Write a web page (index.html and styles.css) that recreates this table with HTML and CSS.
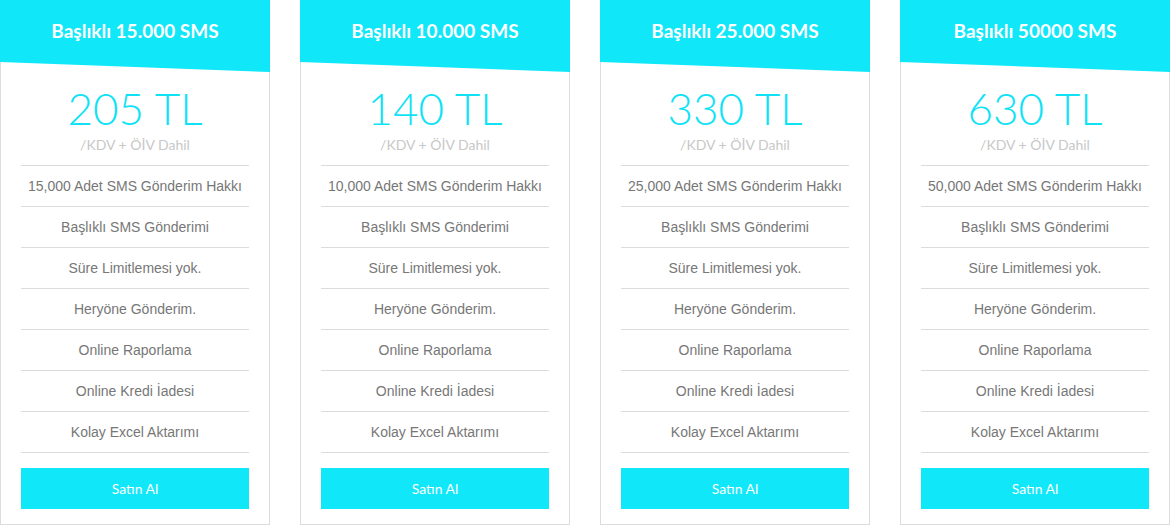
FILE: index.html
```html
<!DOCTYPE html>
<html lang="tr">
<head>
<meta charset="utf-8">
<title>SMS Paketleri</title>
<link rel="stylesheet" href="styles.css">
</head>
<body>
<div class="plans">
  <div class="card">
    <div class="card-head">Başlıklı 15.000 SMS</div>
    <div class="card-body">
      <div class="price">205 TL</div>
      <div class="tax">/KDV + ÖİV Dahil</div>
      <ul class="features">
        <li>15,000 Adet SMS Gönderim Hakkı</li>
        <li>Başlıklı SMS Gönderimi</li>
        <li>Süre Limitlemesi yok.</li>
        <li>Heryöne Gönderim.</li>
        <li>Online Raporlama</li>
        <li>Online Kredi İadesi</li>
        <li>Kolay Excel Aktarımı</li>
      </ul>
      <a class="buy" href="#">Satın Al</a>
    </div>
  </div>
  <div class="card">
    <div class="card-head">Başlıklı 10.000 SMS</div>
    <div class="card-body">
      <div class="price">140 TL</div>
      <div class="tax">/KDV + ÖİV Dahil</div>
      <ul class="features">
        <li>10,000 Adet SMS Gönderim Hakkı</li>
        <li>Başlıklı SMS Gönderimi</li>
        <li>Süre Limitlemesi yok.</li>
        <li>Heryöne Gönderim.</li>
        <li>Online Raporlama</li>
        <li>Online Kredi İadesi</li>
        <li>Kolay Excel Aktarımı</li>
      </ul>
      <a class="buy" href="#">Satın Al</a>
    </div>
  </div>
  <div class="card">
    <div class="card-head">Başlıklı 25.000 SMS</div>
    <div class="card-body">
      <div class="price">330 TL</div>
      <div class="tax">/KDV + ÖİV Dahil</div>
      <ul class="features">
        <li>25,000 Adet SMS Gönderim Hakkı</li>
        <li>Başlıklı SMS Gönderimi</li>
        <li>Süre Limitlemesi yok.</li>
        <li>Heryöne Gönderim.</li>
        <li>Online Raporlama</li>
        <li>Online Kredi İadesi</li>
        <li>Kolay Excel Aktarımı</li>
      </ul>
      <a class="buy" href="#">Satın Al</a>
    </div>
  </div>
  <div class="card">
    <div class="card-head">Başlıklı 50000 SMS</div>
    <div class="card-body">
      <div class="price">630 TL</div>
      <div class="tax">/KDV + ÖİV Dahil</div>
      <ul class="features">
        <li>50,000 Adet SMS Gönderim Hakkı</li>
        <li>Başlıklı SMS Gönderimi</li>
        <li>Süre Limitlemesi yok.</li>
        <li>Heryöne Gönderim.</li>
        <li>Online Raporlama</li>
        <li>Online Kredi İadesi</li>
        <li>Kolay Excel Aktarımı</li>
      </ul>
      <a class="buy" href="#">Satın Al</a>
    </div>
  </div>
</div>
</body>
</html>
```
FILE: styles.css
```css
* { box-sizing: border-box; }
html, body { margin: 0; padding: 0; background: #fff; }
body { font-family: "Lato", "Liberation Sans", sans-serif; }

.plans {
  display: flex;
  gap: 30px;
  align-items: flex-start;
}

.card {
  width: 270px;
  border: 1px solid #dcdcdc;
  background: #fff;
}

.card-head {
  margin: -1px -1px 0;
  height: 72px;
  background: #10e7f9;
  clip-path: polygon(0 0, 100% 0, 100% 72px, 0 62px);
  color: #fff;
  font-family: "Lato", sans-serif;
  font-weight: 700;
  font-size: 19px;
  line-height: 62px;
  text-align: center;
}

.card-body {
  padding: 0 20px 15px;
  text-align: center;
}

.price {
  margin-top: 14px;
  font-family: "Lato", sans-serif;
  font-weight: 300;
  font-size: 44px;
  line-height: 44px;
  color: #10e2f6;
}

.tax {
  margin-top: 5px;
  margin-bottom: 10px;
  font-family: "Lato", sans-serif;
  font-size: 14px;
  line-height: 20px;
  color: #c8c8c8;
}

.features {
  list-style: none;
  margin: 0;
  padding: 0;
  border-top: 1px solid #dcdcdc;
}

.features li {
  height: 41px;
  line-height: 40px;
  border-bottom: 1px solid #dcdcdc;
  font-family: "Liberation Sans", Arial, sans-serif;
  font-size: 14px;
  color: #777;
}

.buy {
  display: block;
  margin-top: 15px;
  height: 41px;
  line-height: 41px;
  background: #10e7f9;
  color: #fff;
  text-decoration: none;
  font-family: "Lato", sans-serif;
  font-size: 14px;
}
```
